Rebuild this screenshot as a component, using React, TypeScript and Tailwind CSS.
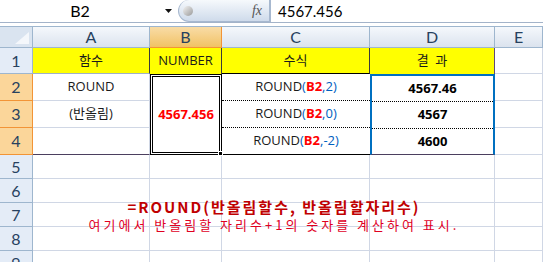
const head = "font-['Lato','Liberation_Sans',sans-serif] text-[16px] text-[#27415f]";
const cellFont = "font-['Open_Sans','Noto_Sans_CJK_KR',sans-serif] text-[13px] text-[#1a1a1a]";
const grid = "border-r border-b border-[#d0d7e5]";

function ColHead({ label, active }: { label: string; active?: boolean }) {
  return (
    <div
      className={
        active
          ? "flex items-center justify-center border-r border-b border-[#f29436] bg-gradient-to-b from-[#f9dca6] to-[#f1c263] " + head
          : "flex items-center justify-center border-r border-b border-[#9eb6ce] bg-gradient-to-b from-[#f5f8fc] to-[#dbe3ee] " + head
      }
    >
      {label}
    </div>
  );
}

function RowHead({ n, active }: { n: number; active?: boolean }) {
  return (
    <div
      className={
        active
          ? "flex items-center justify-center border-r border-b border-[#f29436] bg-[#fbd69a] " + head
          : "flex items-center justify-center border-r border-b border-[#9eb6ce] bg-[#e4ecf7] " + head
      }
    >
      {n}
    </div>
  );
}

function Formula({ arg }: { arg: string }) {
  return (
    <span>
      ROUND<span className="text-[#0060c0]">(</span>
      <span className="font-bold text-[#ff0000]">B2</span>
      <span className="text-[#0060c0]">,{arg})</span>
    </span>
  );
}

export default function App() {
  return (
    <div className="relative h-[262px] w-[543px] overflow-hidden bg-white">
      {/* formula bar */}
      <div className="flex h-[23px] border-b border-[#a3b3c9] bg-white">
        <div className="flex w-[160px] items-center justify-center font-['Lato',sans-serif] text-[16px] text-black">B2</div>
        <div className="flex w-[16px] items-center justify-center">
          <svg width="7" height="4" viewBox="0 0 7 4">
            <path d="M0 0h7L3.5 4z" fill="#111" />
          </svg>
        </div>
        <div className="ml-[2px] flex w-[92px] items-center justify-between rounded-l-full border-r border-b border-l border-[#a7b8cf] bg-gradient-to-b from-[#f6f9fc] to-[#cfdbeb] pl-[4px] pr-[7px]">
          <span className="h-[10px] w-[10px] rounded-full bg-gradient-to-br from-[#f4f4f4] to-[#9a9a9a]" />
          <span className="font-['Liberation_Serif',serif] text-[14px] italic text-[#555]">fx</span>
        </div>
        <div className="flex flex-1 items-center border-l border-[#a7b8cf] pl-[7px] font-['Lato',sans-serif] text-[15px] text-black">
          4567.456
        </div>
      </div>
      <div className="h-[4px] border-b border-[#9eb6ce] bg-white" />

      {/* sheet */}
      <div className="grid grid-cols-[33px_117px_72px_148px_125px_1fr] grid-rows-[21px_26px_27px_27px_27px_24px_24px_24px_24px_24px]">
        <div className="relative border-r border-b border-[#9eb6ce] bg-[#dae4f0]">
          <svg className="absolute right-[3px] bottom-[3px]" width="14" height="12" viewBox="0 0 14 12">
            <path d="M14 0v12H0z" fill="#f4f7fb" />
          </svg>
        </div>
        <ColHead label="A" />
        <ColHead label="B" active />
        <ColHead label="C" />
        <ColHead label="D" />
        <ColHead label="E" />

        {/* row 1 */}
        <RowHead n={1} />
        <div className={"flex items-center justify-center border-r border-b border-r-[#3a3a3a] border-b-[#9fb0c6] bg-[#ffff00] " + cellFont}>함수</div>
        <div className={"flex items-center justify-center border-r border-[#3a3a3a] bg-[#ffff00] " + cellFont}>NUMBER</div>
        <div className={"flex items-center justify-center border-r border-b border-r-[#3a3a3a] border-b-black bg-[#ffff00] " + cellFont}>수식</div>
        <div className={"flex items-center justify-center border-r border-[#5f497a] bg-[#ffff00] " + cellFont}>결&nbsp;&nbsp;과</div>
        <div className={grid} />

        {/* rows 2-4 */}
        <RowHead n={2} active />
        <div className={"flex items-center justify-center " + grid + " " + cellFont}>ROUND</div>
        <div className="relative row-span-3 flex items-center justify-center border-[3px] border-double border-black font-['Open_Sans',sans-serif] text-[13px] font-bold text-[#ff0000]">
          4567.456
          <span className="absolute right-[-4px] bottom-[-4px] h-[5px] w-[5px] border border-white bg-black" />
        </div>
        <div className={"flex items-center justify-center border-b border-dotted border-black " + cellFont}>
          <Formula arg="2" />
        </div>
        <div className="row-span-3 flex flex-col border-x-2 border-t-2 border-b border-x-[#0070c0] border-t-[#0070c0] border-b-[#4b3f5e] font-['Open_Sans',sans-serif] text-[13px] font-bold text-black">
          <div className="flex flex-1 items-center justify-center border-b border-dotted border-black">4567.46</div>
          <div className="flex flex-1 items-center justify-center border-b border-dotted border-black">4567</div>
          <div className="flex flex-1 items-center justify-center">4600</div>
        </div>
        <div className={grid} />

        <RowHead n={3} active />
        <div className={"flex items-center justify-center " + grid + " " + cellFont}>(반올림)</div>
        <div className={"flex items-center justify-center border-b border-dotted border-black " + cellFont}>
          <Formula arg="0" />
        </div>
        <div className={grid} />

        <RowHead n={4} active />
        <div className="border-r border-b border-r-[#d0d7e5] border-b-[#4b3f5e]" />
        <div className={"flex items-center justify-center border-b border-black " + cellFont}>
          <Formula arg="-2" />
        </div>
        <div className={grid} />

        {[5, 6, 7, 8, 9].map((n) => (
          <div key={n} className="contents">
            <RowHead n={n} />
            <div className={grid} />
            <div className={grid} />
            <div className={grid} />
            <div className={grid} />
            <div className={grid} />
          </div>
        ))}
      </div>

      {/* text box over the sheet */}
      <div className="absolute top-[198px] left-[74px] w-[400px] text-center font-['Noto_Sans_CJK_KR',sans-serif]">
        <div className="text-[15px] leading-[18px] font-bold tracking-[2px] text-[#c00000]">=ROUND(반올림할수, 반올림할자리수)</div>
        <div className="text-[13px] leading-[17px] tracking-[3px] text-[#e0001f]">여기에서 반올림할 자리수+1의 숫자를 계산하여 표시.</div>
      </div>
    </div>
  );
}
